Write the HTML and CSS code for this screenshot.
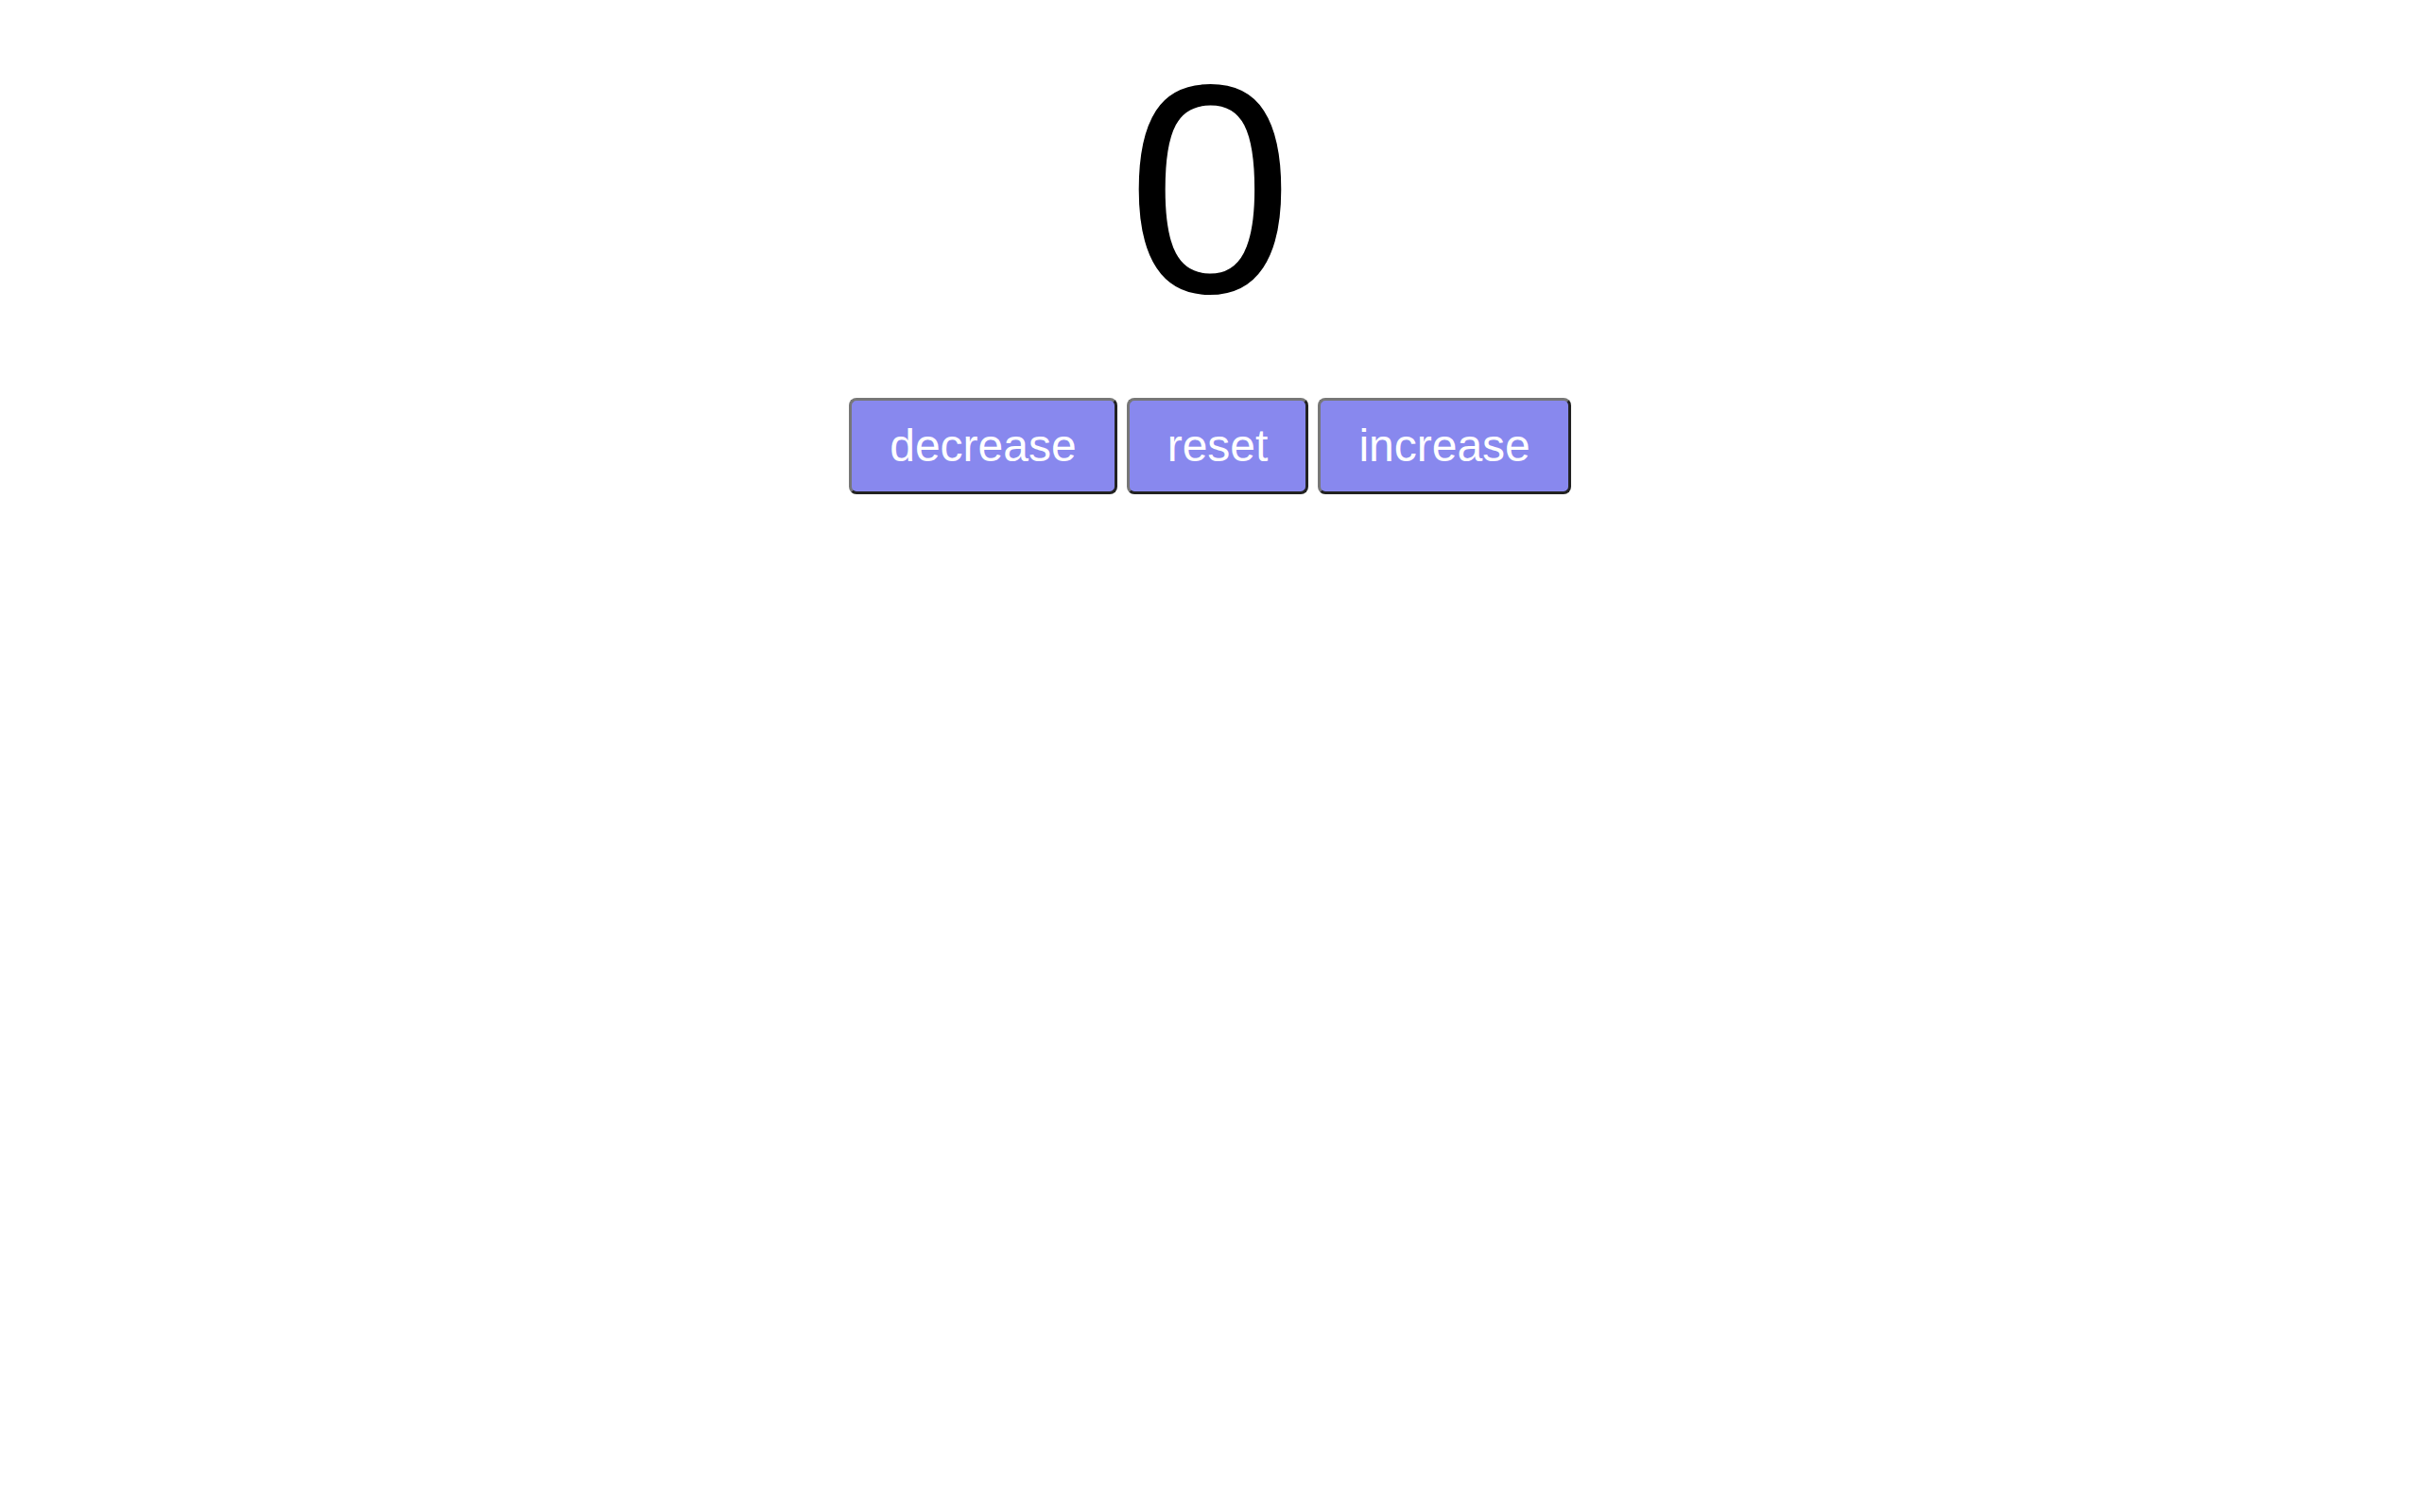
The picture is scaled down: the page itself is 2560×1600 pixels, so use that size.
FILE: index.html
```html
<!DOCTYPE html>
<html>
<head>
<meta charset="utf-8">
<title>Counter</title>
<link rel="stylesheet" href="styles.css">
</head>
<body>
<main class="app">
  <div class="count">0</div>
  <div class="controls">
    <button class="btn">decrease</button>
    <button class="btn">reset</button>
    <button class="btn">increase</button>
  </div>
</main>
</body>
</html>
```
FILE: styles.css
```css
html, body {
  margin: 0;
  padding: 0;
  background: #ffffff;
}
.app {
  font-family: "Liberation Sans", Arial, sans-serif;
  display: flex;
  flex-direction: column;
  align-items: center;
  padding-top: 19px;
}
.count {
  font-size: 315px;
  line-height: normal;
  color: #000000;
}
.controls {
  display: flex;
  gap: 10px;
  margin-top: 40px;
}
.btn {
  font-family: "Liberation Sans", Arial, sans-serif;
  font-size: 48px;
  line-height: 56px;
  color: #ffffff;
  background: #8888ee;
  padding: 20px 40px;
  border: 3px solid;
  border-color: #777777 #222222 #222222 #777777;
  border-radius: 8px;
  margin: 0;
}
```
